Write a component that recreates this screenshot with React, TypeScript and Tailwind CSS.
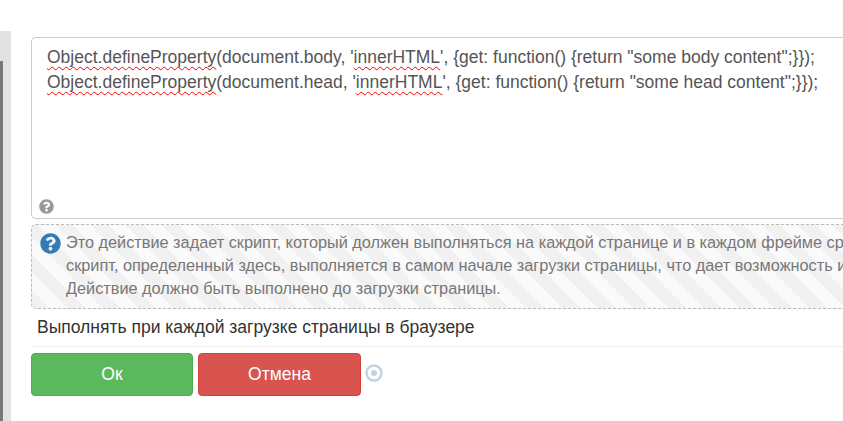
import { FaQuestionCircle } from "react-icons/fa";

const squiggle =
  "underline decoration-wavy decoration-[#ff0000] decoration-1 underline-offset-[3px] [text-decoration-skip-ink:none]";

const CodeLine = ({ target, text }: { target: string; text: string }) => (
  <div className="whitespace-nowrap">
    <span className={squiggle}>Object.defineProperty</span>(document.{target}, '<span className={squiggle}>innerHTML</span>', {"{"}get: function() {"{"}return "{text}";{"}}"});
  </div>
);

export default function App() {
  return (
    <div className="flex h-[421px] w-[843px] overflow-hidden bg-white font-['Liberation_Sans',sans-serif]">
      <div className="w-[11px] shrink-0 pt-[31px]">
        <div className="flex h-full justify-start bg-[#e2e2e2]">
          <div className="mt-[30px] h-full w-[3px] bg-[#777777]" />
        </div>
      </div>
      <div className="w-[860px] shrink-0 pl-[20px] pt-[37px]">
        <div className="flex h-[182px] flex-col justify-between rounded-l-[5px] border border-r-0 border-[#cccccc] pb-[4px] pl-[15px] pt-[7px] text-[17.5px] leading-[25px] text-[#555555]">
          <div>
            <CodeLine target="body" text="some body content" />
            <CodeLine target="head" text="some head content" />
          </div>
          <FaQuestionCircle className="-ml-[8px] text-[15px] text-[#999999]" />
        </div>
        <div className="mt-[5px] flex h-[85px] gap-[5px] rounded-l-[5px] border border-r-0 border-dashed border-[#bbbbbb] bg-[repeating-linear-gradient(45deg,#f1f1f1_0,#f1f1f1_12.5px,#fafafa_12.5px,#fafafa_25px)] pl-[8px] pt-[6px] text-[16.3px] leading-[23px] text-[#777777]">
          <FaQuestionCircle className="mt-[2px] shrink-0 text-[21px] text-[#337ab7]" />
          <div className="whitespace-nowrap">
            <div>Это действие задает скрипт, который должен выполняться на каждой странице и в каждом фрейме сразу после создания</div>
            <div>скрипт, определенный здесь, выполняется в самом начале загрузки страницы, что дает возможность изменить окружение</div>
            <div>Действие должно быть выполнено до загрузки страницы.</div>
          </div>
        </div>
        <div className="mt-[6px] border-b border-[#eeeeee] pb-[7px] pl-[6px] text-[17.5px] leading-[24px] text-[#333333]">
          Выполнять при каждой загрузке страницы в браузере
        </div>
        <div className="mt-[6px] flex items-center gap-[5px]">
          <button className="h-[43px] w-[162px] rounded-[4px] border border-[#4cae4c] bg-[#5cb85c] text-[17.5px] text-white">Ок</button>
          <button className="h-[43px] w-[163px] rounded-[4px] border border-[#d43f3a] bg-[#d9534f] text-[17.5px] text-white">Отмена</button>
          <svg className="-mt-[3px] -ml-[1px]" width="18" height="18" viewBox="0 0 18 18">
            <circle cx="9" cy="9" r="7.5" fill="none" stroke="#c2d3de" strokeWidth="2.4" />
            <circle cx="9" cy="9" r="3" fill="#c2d3de" />
          </svg>
        </div>
      </div>
    </div>
  );
}
